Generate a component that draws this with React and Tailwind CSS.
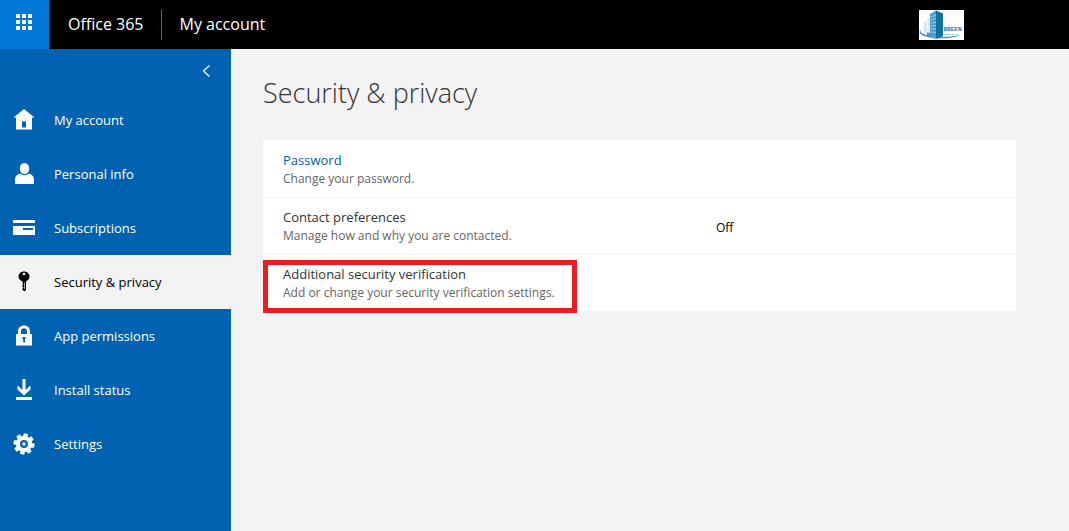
import React from "react";

function HomeIcon() {
  return (
    <svg viewBox="0 0 22 22" className="size-[22px]" fill="currentColor" aria-hidden="true">
      <path fillRule="evenodd" d="M11 0 L21.5 8.500 H19 V20.500 H3 V8.500 H.5 Z M9 12.500 V18.500 H13 V12.500 Z" />
    </svg>
  );
}

function PersonIcon() {
  return (
    <svg viewBox="0 0 22 22" className="size-[22px]" fill="currentColor" aria-hidden="true">
      <ellipse cx="11.5" cy="5.5" rx="4.7" ry="5.5" />
      <path d="M2 21 V17 C2 13 4.500 11 7.200 10.500 C9.500 12.700 13.500 12.700 15.800 10.500 C18.500 11 21 13 21 17 V21 Z" />
    </svg>
  );
}

function CardIcon() {
  return (
    <svg viewBox="0 0 22 22" className="size-[22px]" fill="currentColor" aria-hidden="true">
      <path fillRule="evenodd" d="M0 3 H22 V6 H0 Z M0 9 H22 V18 H0 Z M10 11 V13 H20 V11 Z" />
    </svg>
  );
}

function KeyIcon() {
  return (
    <svg viewBox="0 0 22 22" className="size-[22px]" fill="currentColor" aria-hidden="true">
      <path
        fillRule="evenodd"
        d="M11 .5 C14.200 .5 16.500 2.700 16.500 5.500 C16.500 8 15 9.500 13 10.300 V18.500 L11.500 20.500 L9.500 19 V17.500 L10.300 16.500 L9.500 15.500 V14 L10.300 13 L9.500 12 V10.300 C7 9.500 5.500 7.800 5.500 5.500 C5.500 2.700 7.800 .5 11 .5 Z M11 1.800 A1.400 1.200 0 1 0 11 4.200 A1.400 1.200 0 1 0 11 1.800 Z M11.300 11.500 V18 H12 V11.500 Z"
      />
    </svg>
  );
}

function LockIcon() {
  return (
    <svg viewBox="0 0 22 22" className="size-[22px]" fill="currentColor" aria-hidden="true">
      <path
        fillRule="evenodd"
        d="M5 9 V6.500 C5 2.800 7.500 .5 11 .5 C14.500 .5 17 2.800 17 6.500 V9 H19 V20.500 H3 V9 Z M8 9 H14 V6.500 C14 4.500 12.800 3.300 11 3.300 C9.200 3.300 8 4.500 8 6.500 Z M9.500 12 V14 H10.200 V17.500 H12 V14 H12.500 V12 Z"
      />
    </svg>
  );
}

function DownloadIcon() {
  return (
    <svg viewBox="0 0 22 22" className="size-[22px]" fill="currentColor" aria-hidden="true">
      <path d="M9.500 0 H12.500 V11 L17.500 6.500 V10.500 L11 16.500 L4.500 10.500 V6.500 L9.500 11 Z M3 18 H19 V21 H3 Z" />
    </svg>
  );
}

function GearIcon() {
  return (
    <svg viewBox="0 0 22 22" className="size-[22px]" aria-hidden="true">
      <g fill="currentColor">
        {[10, 55, 100, 145, 190, 235, 280, 325].map((angle) => (
          <path key={angle} d="M8.500 5 L9 .5 H13 L13.500 5 Z" transform={`rotate(${angle} 11 11)`} />
        ))}
      </g>
      <circle cx="11" cy="11" r="6" fill="none" stroke="currentColor" strokeWidth="4" />
      <circle cx="11" cy="11" r="1.700" fill="currentColor" />
    </svg>
  );
}

const navItems = [
  { label: "My account", Icon: HomeIcon },
  { label: "Personal info", Icon: PersonIcon },
  { label: "Subscriptions", Icon: CardIcon },
  { label: "Security & privacy", Icon: KeyIcon, current: true },
  { label: "App permissions", Icon: LockIcon },
  { label: "Install status", Icon: DownloadIcon },
  { label: "Settings", Icon: GearIcon },
];

function CompanyLogo() {
  return (
    <svg viewBox="0 0 45 30" className="h-[30px] w-[45px]" role="img" aria-label="Breen Engineering, Inc">
      <rect width="45" height="30" fill="#fff" />
      <path d="M5 12 L7.500 10.500 V22 H5 Z M8.500 8.500 L10.500 7.500 V23 H8.500 Z" fill="#d5e5ef" />
      <path d="M5 18.500 C-1 20.500 1 24 9 25.500 C19 27.500 32 27 43 25 C31 29 14 29.500 5 26 C-1.500 23.500 -.5 20 5 18.500 Z" fill="#3c8fbd" />
      <path d="M11 4 L17 .5 V29 L8 25.500 V22 L11 23 Z" fill="#4d9bc6" />
      <path d="M17 .5 L24 3.500 V26 L17 29 Z" fill="#1070a6" />
      <path d="M11.500 7 L17 5 M11.500 10 L17 8.500 M11.500 13 L17 12 M11.500 16 L17 15.500 M11.500 19 L17 19 M11.500 22 L17 22.500" stroke="#b3d6e8" strokeWidth=".8" />
      <text x="24.5" y="20.5" className="font-['Liberation_Mono',monospace] text-[6px] font-bold" fill="#35779b">BREEN</text>
      <text x="24.5" y="25" className="font-['Liberation_Sans',sans-serif] text-[2px]" fill="#1c74a8">Engineering, Inc</text>
    </svg>
  );
}

function SettingText({ title, description, href }) {
  return (
    <div>
      <h2 className="text-[13px] leading-5 text-[#333]">
        {href ? <a href={href} className="text-[#0062b1]">{title}</a> : title}
      </h2>
      <p className="text-xs leading-[18px] text-[#666]">{description}</p>
    </div>
  );
}

export default function App() {
  return (
    <div className="flex min-h-screen flex-col bg-[#f3f3f3] font-['Open_Sans','Noto_Sans',sans-serif] text-black">
      <header className="flex h-[49px] items-center bg-black text-white">
        <button type="button" aria-label="App launcher" className="flex h-full w-[50px] justify-center border-r border-[#333] bg-[#0078d7] pt-3.5 pr-px">
          <svg viewBox="0 0 16 16" className="size-4" fill="#fff" aria-hidden="true">
            {[0, 6, 12].map((y) => [0, 6, 12].map((x) => <rect key={`${x}-${y}`} x={x} y={y} width="4" height="4" />))}
          </svg>
        </button>
        <a href="#" className="px-[18px] pb-0.5 text-base">Office 365</a>
        <span className="-ml-px h-[30px] w-px bg-[#666]" />
        <a href="#" className="px-[18px] pb-0.5 text-base">My account</a>
        <a href="#" className="mr-[105px] ml-auto"><CompanyLogo /></a>
      </header>

      <div className="flex flex-1">
        <nav aria-label="Account" className="w-[231px] shrink-0 bg-[#0062b1] text-white">
          <div className="flex h-11 items-center justify-end pr-5">
            <button type="button" aria-label="Collapse navigation">
              <svg viewBox="0 0 9 12" className="h-3 w-[9px]" fill="none" stroke="currentColor" strokeWidth="1.200" aria-hidden="true">
                <path d="M7.500 .5 L1.500 6 L7.500 11.500" />
              </svg>
            </button>
          </div>
          <ul>
            {navItems.map(({ label, Icon, current }) => (
              <li key={label}>
                <a
                  href="#"
                  aria-current={current ? "page" : undefined}
                  className={`flex h-[54px] items-center gap-[19px] pl-[13px] text-[13px] ${current ? "bg-[#f3f3f3] text-black" : ""}`}
                >
                  <Icon />
                  <span className="pt-0.5">{label}</span>
                </a>
              </li>
            ))}
          </ul>
        </nav>

        <main className="min-w-0 flex-1 pr-[53px] pl-8">
          <h1 className="pt-6 pb-[27px] text-[27px] leading-10 font-light text-[#333]">Security &amp; privacy</h1>
          <ul className="divide-y divide-[#f3f3f3] bg-white">
            <li className="flex h-[58px] items-center px-5">
              <SettingText title="Password" description="Change your password." href="#" />
            </li>
            <li className="grid h-[57px] grid-cols-[433px_1fr] items-center px-5">
              <SettingText title="Contact preferences" description="Manage how and why you are contacted." />
              <span className="pt-1 text-xs">Off</span>
            </li>
            <li className="relative flex h-14 items-center px-5">
              <SettingText title="Additional security verification" description="Add or change your security verification settings." />
              <span className="pointer-events-none absolute top-[5px] left-0 h-[53px] w-[314px] border-5 border-[#ed1c24]" />
            </li>
          </ul>
        </main>
      </div>
    </div>
  );
}
